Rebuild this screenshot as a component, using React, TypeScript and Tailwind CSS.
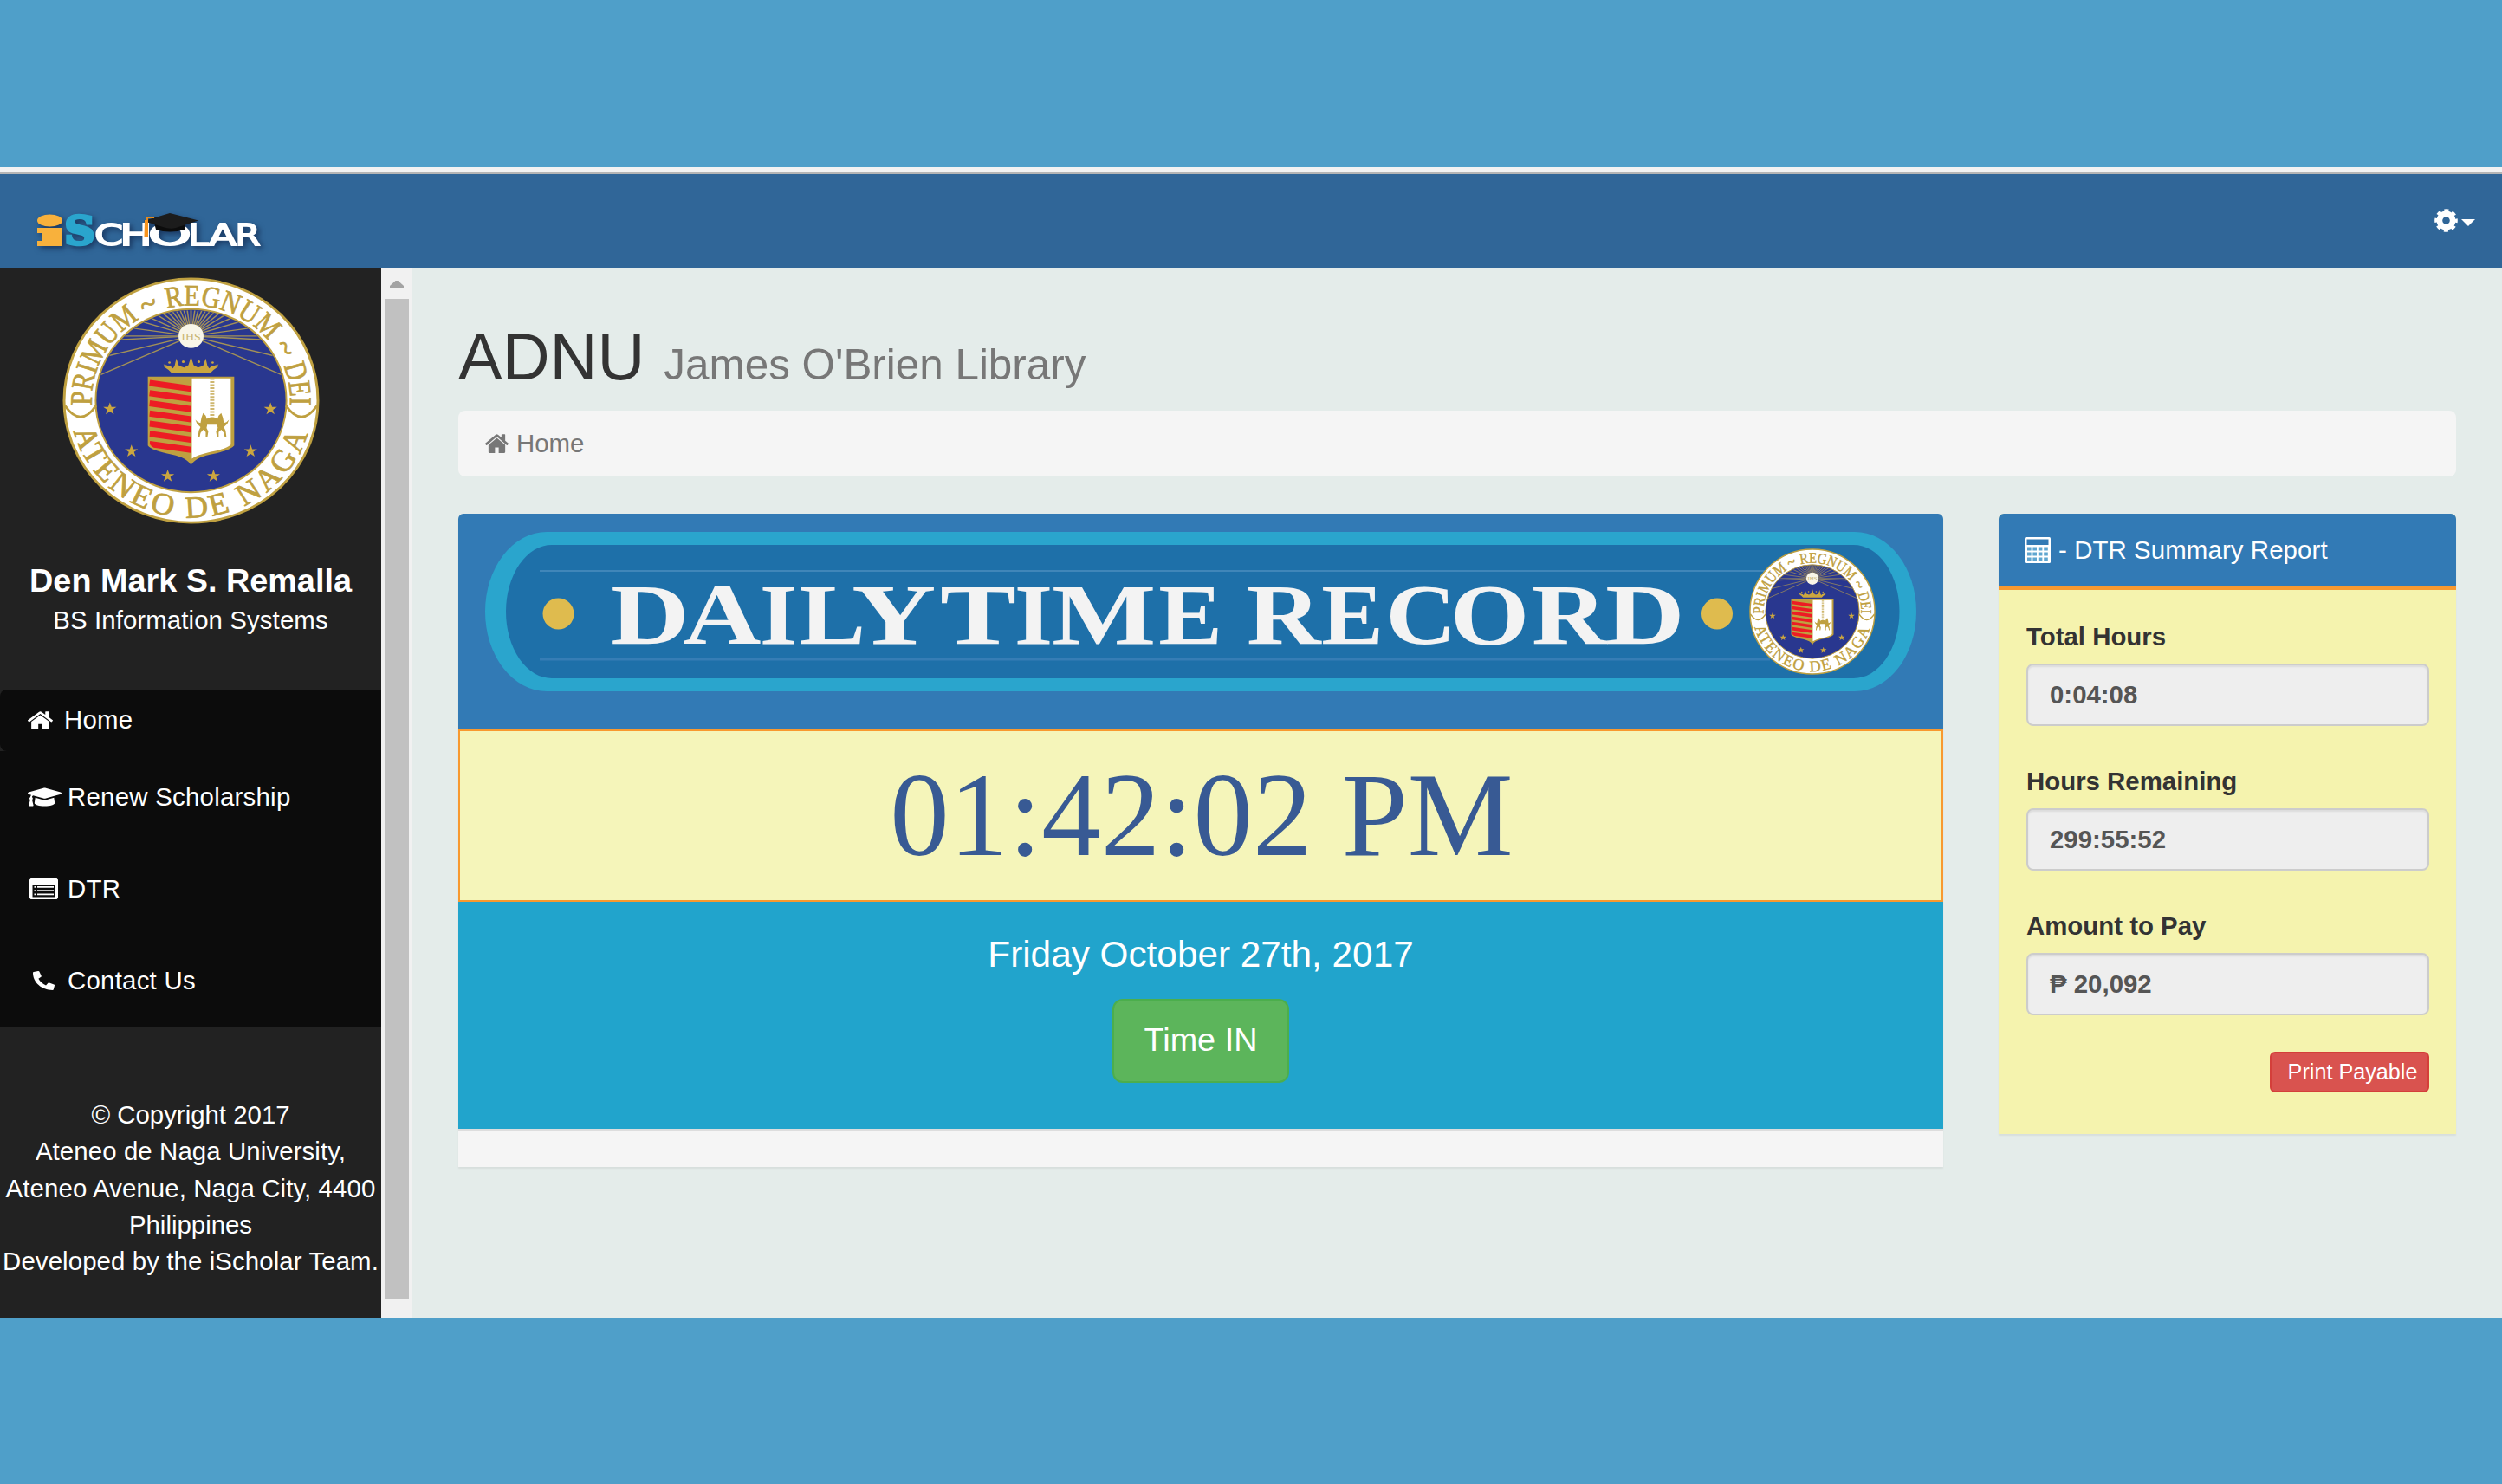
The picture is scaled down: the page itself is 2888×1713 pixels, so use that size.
import { useId } from "react";
import type { ReactNode } from "react";
import { FaGraduationCap, FaPhoneAlt } from "react-icons/fa";

const GOLD = "#bfa040";
const NAVY = "#29378f";

const STAR =
  "M0 -8 L1.9 -2.5 L7.6 -2.5 L3 1 L4.7 6.5 L0 3.2 L-4.7 6.5 L-3 1 L-7.6 -2.5 L-1.9 -2.5 Z";

const STARS = [
  [-94, 10],
  [-69, 61],
  [-27, 91],
  [92, 10],
  [69, 61],
  [26, 91],
];

const RAYS = [-24, -14, -3, 0, 8, 17, 25, 33, 40, 47, 54, 61, 68, 75, 82, 90];

function RingWord({ arc, angle, length, children }: { arc: string; angle: number; length?: number; children: string }) {
  return (
    <g transform={`rotate(${angle})`}>
      <text fontSize="36" textAnchor="middle" textLength={length} lengthAdjust="spacingAndGlyphs">
        <textPath href={`#${arc}`} startOffset="50%" textLength={length} lengthAdjust="spacingAndGlyphs">
          {children}
        </textPath>
      </text>
    </g>
  );
}

function Wolf({ flip }: { flip?: boolean }) {
  return (
    <path
      transform={flip ? "translate(49 0) scale(-1 1)" : undefined}
      d="M14 15 l3 3 l2 6 l5 1 l0 2 l-5 1 l-1 5 l2 4 l-1 7 l-2 0 l0 -6 l-3 -3 l-3 4 l-1 5 l-2 0 l1 -8 l2 -4 l-4 -4 l-2 -5 l3 3 l3 1 l1 -6 z"
    />
  );
}

function Seal({ className }: { className?: string }) {
  const id = useId();
  const top = `${id}top`;
  const bottom = `${id}bottom`;
  const disc = `${id}disc`;
  const shield = `${id}shield`;
  return (
    <svg viewBox="-149 -149 298 298" preserveAspectRatio="none" className={className}>
      <defs>
        <path id={top} d="M-115 0 A115 115 0 0 1 115 0" />
        <path id={bottom} d="M-141 0 A141 141 0 0 0 141 0" />
        <clipPath id={disc}>
          <circle r="109" />
        </clipPath>
        <clipPath id={shield}>
          <path d="M-49 -29 H0 V75 Q-3 68 -22 64 Q-44 60 -48 52 Z" />
        </clipPath>
      </defs>
      <circle r="147" fill="#fff" stroke={GOLD} strokeWidth="3" />
      <g fill={GOLD} fontFamily="'Liberation Serif', serif" stroke={GOLD} strokeWidth="0.8">
        <RingWord arc={top} angle={-62} length={124}>PRIMUM</RingWord>
        <RingWord arc={top} angle={-23}>~</RingWord>
        <RingWord arc={top} angle={18.5} length={131}>REGNUM</RingWord>
        <RingWord arc={top} angle={60}>~</RingWord>
        <RingWord arc={top} angle={80.5} length={49}>DEI</RingWord>
        <text fontSize="37" textAnchor="middle" letterSpacing="3.6">
          <textPath href={`#${bottom}`} startOffset="50%">
            ATENEO DE NAGA
          </textPath>
        </text>
      </g>
      <circle r="110.500" fill={NAVY} stroke={GOLD} strokeWidth="2" />
      <path d="M-146 6 Q-128 33 -110 6 M110 6 Q128 33 146 6" fill="none" stroke={GOLD} strokeWidth="3" />
      <g clipPath={`url(#${disc})`} stroke="#a39157" strokeWidth="1.5">
        {RAYS.flatMap((deg) =>
          [1, -1].map((side) => (
            <line
              key={`${deg}${side}`}
              x1="0"
              y1="-78"
              x2={side * 130 * Math.cos((deg * Math.PI) / 180)}
              y2={-78 - 130 * Math.sin((deg * Math.PI) / 180)}
            />
          )),
        )}
      </g>
      <circle cy="-78" r="14.5" fill="#f8f5e8" />
      <text y="-73" fontSize="14" textAnchor="middle" fill="#c9b673" fontFamily="'Liberation Serif', serif">
        IHS
      </text>
      <g fill="#cba63f">
        <path d="M-26 -37 L-33 -42 L-29 -40 L-32 -44 L-23 -41 L-21 -39 L-19 -42 L-17 -51 L-14 -42 L-8 -40 L-3 -43 L0 -53 L3 -43 L8 -40 L14 -42 L17 -51 L19 -42 L21 -39 L23 -41 L32 -44 L29 -40 L33 -42 L26 -37 L22 -33 H-22 Z" />
        <circle cx="-9" cy="-47" r="1.6" />
        <circle cx="9" cy="-47" r="1.6" />
        <circle cx="-25" cy="-46" r="1.4" />
        <circle cx="25" cy="-46" r="1.4" />
        {STARS.map(([x, y]) => (
          <path key={`${x},${y}`} d={STAR} transform={`translate(${x} ${y})`} />
        ))}
      </g>
      <path d="M-50 -29 H50 V54 Q46 60 22 65 Q4 69 0 78 Q-4 69 -22 65 Q-46 60 -50 54 Z" fill={GOLD} />
      <path d="M1 -27 H46 V53 Q42 58 22 62 Q6 66 1 70 Z" fill="#fff" />
      <g clipPath={`url(#${shield})`} stroke="#ed1c24" strokeWidth="7.4">
        {[0, 1, 2, 3, 4, 5, 6].map((n) => (
          <line key={n} x1="-48" y1={-21.5 + n * 12.3} x2="0" y2={-14.5 + n * 12.3} />
        ))}
      </g>
      <line x1="24.5" y1="-27" x2="24.5" y2="22" stroke={GOLD} strokeWidth="5" strokeDasharray="2 1.6" opacity="0.75" />
      <g fill={GOLD}>
        <Wolf />
        <Wolf flip />
        <path d="M18 22 Q24.500 18 31 22 L30 29 H19 Z" />
      </g>
    </svg>
  );
}

function Logo() {
  return (
    <svg viewBox="36 236 276 60" width="276" height="60" className="drop-shadow-[3px_3px_3px_rgba(10,25,60,0.6)]">
      <ellipse cx="57.500" cy="254.500" rx="14.500" ry="7" fill="#f8b13c" />
      <path d="M43 263 H72 V278 H72 V284 H43 V278 H49 V269 H43 Z" fill="#f8b13c" />
      <text
        x="74.500"
        y="282"
        fontFamily="'DejaVu Serif', serif"
        fontWeight="700"
        fontSize="45"
        textLength="35"
        lengthAdjust="spacingAndGlyphs"
        fill="#2aa5cd"
        stroke="#2aa5cd"
        strokeWidth="3.500"
      >
        S
      </text>
      <g fontFamily="'DejaVu Sans', sans-serif" fontSize="33" fill="#fff" stroke="#fff" strokeWidth="1.8">
        <text y="283" x="109" textLength="33" lengthAdjust="spacingAndGlyphs">C</text>
        <text y="283" x="138.500" textLength="37" lengthAdjust="spacingAndGlyphs">H</text>
        <text y="283" x="171" textLength="50" lengthAdjust="spacingAndGlyphs">O</text>
        <text y="283" x="217.500" textLength="23" lengthAdjust="spacingAndGlyphs">L</text>
        <text y="283" x="241" textLength="32" lengthAdjust="spacingAndGlyphs">A</text>
        <text y="283" x="271.500" textLength="29" lengthAdjust="spacingAndGlyphs">R</text>
      </g>
      <path d="M178 257 H214 L213 265 Q196 270 180 265 Z" fill="#0c0c0c" />
      <path d="M196 246 L229 254.500 L203 263 Q196 265 188 262 L166 255 Z" fill="#1c1c1c" />
      <path d="M178 251 H170 V256" fill="none" stroke="#e58a1c" strokeWidth="2" />
      <path d="M167 254 H171 V273 H166.500 Z" fill="#f7941e" />
    </svg>
  );
}

/* Left and right ink edges of each banner letter. */
const TITLE: [string, number, number][] = [
  ["D", 706, 791],
  ["A", 790, 877],
  ["I", 879, 918],
  ["L", 925, 996],
  ["Y", 985, 1074],
  [" ", 0, 0],
  ["T", 1089, 1169],
  ["I", 1173, 1213],
  ["M", 1216, 1332],
  ["E", 1339, 1408],
  [" ", 0, 0],
  ["R", 1441, 1524],
  ["E", 1527, 1594],
  ["C", 1603, 1675],
  ["O", 1678, 1761],
  ["R", 1770, 1854],
  ["D", 1855, 1940],
];

/* Liberation Serif Bold at 100px: ink start, ink end, advance. */
const METRICS: Record<string, [number, number, number]> = {
  D: [1.5, 68.5, 72.2],
  A: [1, 71, 72.2],
  I: [2, 37, 38.9],
  L: [2, 64, 66.7],
  Y: [1.5, 71, 72.2],
  T: [3, 63.6, 66.7],
  M: [1.5, 92.5, 94.4],
  E: [1.6, 64, 66.7],
  R: [1.6, 71.5, 72.2],
  C: [3, 67, 72.2],
  O: [3.5, 74.3, 77.8],
};

function Banner() {
  return (
    <svg viewBox="560 614 1652 184" width="1652" height="184" className="block">
      <rect x="560" y="614" width="1652" height="184" rx="71" ry="92" fill="#2aa5cd" />
      <rect x="584" y="629" width="1608.500" height="154" rx="53" ry="77" fill="#1e70a9" />
      <rect x="623" y="658" width="1420" height="2" fill="#4086b9" />
      <rect x="623" y="760" width="1420" height="2.500" fill="#367db5" />
      <circle cx="644.500" cy="708.500" r="18" fill="#dfbb4e" />
      <circle cx="1982" cy="708.500" r="18" fill="#dfbb4e" />
      <text y="742.500" fontFamily="'Liberation Serif', serif" fontWeight="700" fontSize="100" fill="#f3f3f3">
        {TITLE.map(([letter, from, to], i) => {
          if (letter === " ") return " ";
          const [inkStart, inkEnd, advance] = METRICS[letter];
          const scale = (to - from) / (inkEnd - inkStart);
          return (
            <tspan
              key={i}
              x={(from - inkStart * scale).toFixed(1)}
              textLength={(advance * scale).toFixed(1)}
              lengthAdjust="spacingAndGlyphs"
            >
              {letter}
            </tspan>
          );
        })}
      </text>
    </svg>
  );
}

function HomeIcon({ className }: { className?: string }) {
  return (
    <svg viewBox="26 240 1612 1300" preserveAspectRatio="none" fill="currentColor" className={className}>
      <path d="M1408 992v480q0 26 -19 45t-45 19h-384v-384h-256v384h-384q-26 0 -45 -19t-19 -45v-480q0 -1 .5 -3t.5 -3l575 -474l575 474q1 2 1 6zM1631 923l-62 74q-8 9 -21 11h-3q-13 0 -21 -7l-692 -577l-692 577q-12 8 -24 7q-13 -2 -21 -11l-62 -74q-8 -10 -7 -23.5t11 -21.5l719 -599q32 -26 76 -26t76 26l244 204v-195q0 -14 9 -23t23 -9h192q14 0 23 9t9 23v408l219 182q10 8 11 21.500t-7 23.500z" />
    </svg>
  );
}

function GearIcon() {
  return (
    <svg viewBox="-13.500 -13.500 27 27" className="h-[27px] w-[27px]" fill="none" stroke="currentColor">
      <circle r="7.600" strokeWidth="6.600" />
      <circle r="11.500" strokeWidth="3.600" strokeDasharray="4.900 4.132" strokeDashoffset="2.450" />
    </svg>
  );
}

function ListIcon() {
  return (
    <svg viewBox="0 0 33 24" className="ml-[34px] h-6 w-[33px]" fill="#fff">
      <path fillRule="evenodd" d="M1.500 0 H31.500 L33 1.500 V22.500 L31.500 24 H1.500 L0 22.500 V1.500 Z M3.500 7 V21.500 H29.500 V7 Z" />
      <path d="M5.500 9h2.200v1.800h-2.200z M9 9h19v1.800h-19z M5.500 13.200h2.200v1.800h-2.200z M9 13.200h19v1.800h-19z M5.500 17.400h2.200v1.800h-2.200z M9 17.400h19v1.800h-19z" />
    </svg>
  );
}

function CalculatorIcon() {
  const cells = [0, 1, 2, 3].flatMap((c) => [0, 1, 2].map((r) => [c, r]));
  return (
    <svg viewBox="0 0 30 30" className="h-[30px] w-[30px]">
      <rect width="30" height="30" rx="1.500" fill="#fff" />
      <rect x="2.500" y="2.500" width="25" height="6.500" fill="#327ab5" />
      {cells.map(([c, r]) => (
        <rect key={`${c}${r}`} x={3 + c * 6.4} y={11.5 + r * 6} width="4.600" height="4" fill="#5fa6d0" />
      ))}
    </svg>
  );
}

function MenuItem({ icon, label, className }: { icon: ReactNode; label: string; className: string }) {
  return (
    <div className={`flex items-center bg-[#0c0c0c] tracking-[0.25px] ${className}`}>
      {icon}
      {label}
    </div>
  );
}

function Field({ label, value }: { label: string; value: string }) {
  return (
    <div className="mb-[43px] font-bold">
      <div className="leading-[42px] text-[#333]">{label}</div>
      <div className="mt-[10px] flex h-[72px] items-center rounded-lg border-2 border-[#ccc] bg-[#eee] pt-px pl-[25px] text-[#555] shadow-[inset_0_2px_2px_rgba(0,0,0,0.075)]">
        {value}
      </div>
    </div>
  );
}

export default function App() {
  return (
    <div className="flex h-[1713px] w-[2888px] flex-col bg-[#4f9fc9] pt-[193px] font-['Liberation_Sans',Arial,sans-serif] text-[29.4px]">
      <div className="h-[6px] bg-[#f2f2f2]" />
      <div className="h-[2px] bg-[#b5b5b5]" />
      <header className="flex h-[108px] shrink-0 items-start justify-between bg-[#306698] pl-9 text-white">
        <div className="mt-[35px]">
          <Logo />
        </div>
        <div className="mt-10 mr-[31px] flex items-center gap-1">
          <GearIcon />
          <svg viewBox="0 0 16 8" className="mt-1 h-2 w-4" fill="currentColor">
            <path d="M0 0H16L8 8Z" />
          </svg>
        </div>
      </header>

      <div className="flex h-[1212px] shrink-0">
        <aside className="w-[440px] shrink-0 bg-[#222] pt-[11px] text-center text-white">
          <Seal className="mx-auto h-[285px] w-[297px]" />
          <div className="mt-[45px] text-[37.8px] leading-[41px] font-bold">Den Mark S. Remalla</div>
          <div className="mt-1 leading-[42px] tracking-[0.1px]">BS Information Systems</div>
          <nav className="mt-[59px] text-left whitespace-nowrap">
            <MenuItem
              className="h-[71px] rounded-l-lg"
              icon={<HomeIcon className="mr-[13px] ml-8 h-[21px] w-[29px]" />}
              label="Home"
            />
            <MenuItem
              className="h-[106px]"
              icon={<FaGraduationCap className="mr-[7px] ml-8 h-7 w-[39px]" preserveAspectRatio="none" />}
              label="Renew Scholarship"
            />
            <MenuItem className="h-[106px] gap-[11px]" icon={<ListIcon />} label="DTR" />
            <MenuItem
              className="h-[106px]"
              icon={<FaPhoneAlt className="mr-[15px] ml-[38px] h-[22px] w-[25px]" preserveAspectRatio="none" />}
              label="Contact Us"
            />
          </nav>
          <div className="mt-[81px] leading-[42.25px] whitespace-nowrap">
            <div>© Copyright 2017</div>
            <div className="tracking-[0.1px]">Ateneo de Naga University,</div>
            <div className="tracking-[0.1px]">Ateneo Avenue, Naga City, 4400</div>
            <div>Philippines</div>
            <div className="tracking-[0.1px]">Developed by the iScholar Team.</div>
          </div>
        </aside>

        <div className="flex w-9 shrink-0 flex-col items-center bg-[#f1f1f1]">
          <svg viewBox="0 0 16 9" className="mt-[15px] h-[9px] w-4" fill="#a3a3a3">
            <path d="M0 9V6L6.500 0H9.500L16 6V9Z" />
          </svg>
          <div className="mt-3 h-[1155px] w-7 bg-[#c1c1c1]" />
        </div>

        <main className="flex-1 bg-[#e4ecea] px-[53px] pt-[61px]">
          <h1 className="flex h-[84px] items-baseline text-[76px] leading-[84px] whitespace-nowrap text-[#333]">
            ADNU
            <small className="ml-[22px] text-[49.4px] text-[#777]">James O'Brien Library</small>
          </h1>
          <div className="mt-5 flex h-[76px] items-center rounded-lg bg-[#f5f5f5] pl-[31px] text-[#777]">
            <HomeIcon className="mr-[9px] h-[22px] w-[27px]" />
            Home
          </div>

          <div className="mt-[43px] flex items-start gap-16">
            <section className="w-[1714px] overflow-hidden rounded-t-md shadow-[0_2px_2px_rgba(0,0,0,0.06)]">
              <div className="h-[249px] bg-[#327ab5] px-[31px] pt-[21px]">
                <div className="relative">
                  <Banner />
                  <Seal className="absolute top-[19px] left-[1459px] h-[146px] w-[146px]" />
                </div>
              </div>
              <div className="flex h-[199px] items-center justify-center border-2 border-[#f8992f] bg-[#f5f5ba] pl-[2px] font-['Liberation_Serif',serif] text-[137px] leading-none text-[#385a94]">
                01:42:02 PM
              </div>
              <div className="flex h-[262px] flex-col items-center bg-[#21a4cc] pt-[38px] text-white">
                <div className="text-[42.3px] leading-[46px]">Friday October 27th, 2017</div>
                <button className="mt-7 h-[97px] w-[204px] rounded-xl border-2 border-[#4cae4c] bg-[#5cb55b] pb-[2px] text-[37.8px]">
                  Time IN
                </button>
              </div>
              <div className="h-11 border-t-2 border-[#ddd] bg-[#f5f5f5]" />
            </section>

            <section className="w-[528px] overflow-hidden rounded-t-md bg-[#f5f3ae] shadow-[0_2px_2px_rgba(0,0,0,0.06)]">
              <div className="flex h-[88px] items-center gap-[9px] border-b-4 border-[#f8992f] bg-[#327ab5] pl-[30px] tracking-[0.1px] text-white">
                <CalculatorIcon />
                - DTR Summary Report
              </div>
              <div className="flex flex-col pt-[33px] pr-[31px] pb-12 pl-8">
                <Field label="Total Hours" value="0:04:08" />
                <Field label="Hours Remaining" value="299:55:52" />
                <Field label="Amount to Pay" value="₱ 20,092" />
                <button className="-mt-px h-[47px] w-[184px] self-end rounded-md border-2 border-[#d43f3a] bg-[#d9534f] pl-[7px] text-[25.2px] leading-none whitespace-nowrap text-white">
                  Print Payable
                </button>
              </div>
            </section>
          </div>
        </main>
      </div>
    </div>
  );
}
